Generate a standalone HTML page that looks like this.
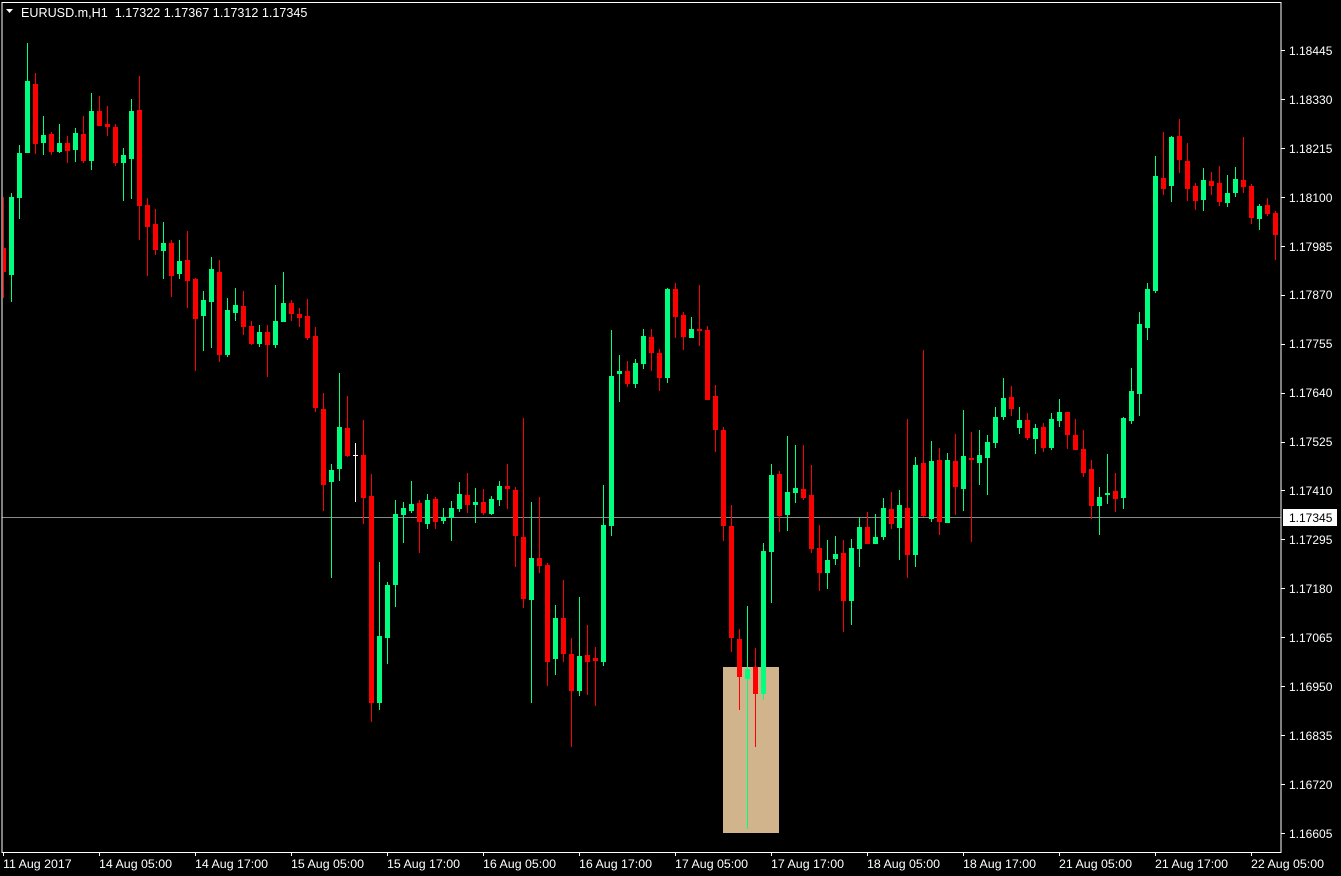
<!DOCTYPE html>
<html><head><meta charset="utf-8"><style>
html,body{margin:0;padding:0;background:#000;}
body{width:1341px;height:876px;overflow:hidden;position:relative;font-family:"Liberation Sans",sans-serif;}
svg{position:absolute;left:0;top:0;}
text{font-family:"Liberation Sans",sans-serif;font-size:12px;fill:#fff;}
.d{font-size:12.4px;}
</style></head><body>
<svg id="s" width="1341" height="876" viewBox="0 0 1341 876" xmlns="http://www.w3.org/2000/svg">
<rect x="0" y="0" width="1341" height="876" fill="#000"/>
<rect x="723" y="667" width="56" height="166" fill="#d2b48c"/>
<line x1="2" y1="517.5" x2="1281" y2="517.5" stroke="#8a8a8a" stroke-width="1"/>
<g id="c"></g>
<rect x="2" y="2.5" width="1279" height="850" fill="none" stroke="#fff" stroke-width="1"/>
<polygon points="6,9 13,9 9.5,13" fill="#fff"/>
<text x="21" y="17" style="font-size:12.6px">EURUSD.m,H1&#160;&#160;1.17322 1.17367 1.17312 1.17345</text>
<g id="ax"></g>
<rect x="1283" y="509" width="54" height="17" fill="#fff"/>
<text x="1289" y="522" style="fill:#000">1.17345</text>
<text class="d" x="3" y="868">11 Aug 2017</text>
<text class="d" x="99" y="868">14 Aug 05:00</text>
<text class="d" x="195" y="868">14 Aug 17:00</text>
<text class="d" x="291" y="868">15 Aug 05:00</text>
<text class="d" x="387" y="868">15 Aug 17:00</text>
<text class="d" x="483" y="868">16 Aug 05:00</text>
<text class="d" x="579" y="868">16 Aug 17:00</text>
<text class="d" x="675" y="868">17 Aug 05:00</text>
<text class="d" x="771" y="868">17 Aug 17:00</text>
<text class="d" x="867" y="868">18 Aug 05:00</text>
<text class="d" x="963" y="868">18 Aug 17:00</text>
<text class="d" x="1059" y="868">21 Aug 05:00</text>
<text class="d" x="1155" y="868">21 Aug 17:00</text>
<text class="d" x="1251" y="868">22 Aug 05:00</text>
<text x="1289" y="55">1.18445</text>
<text x="1289" y="104">1.18330</text>
<text x="1289" y="153">1.18215</text>
<text x="1289" y="202">1.18100</text>
<text x="1289" y="251">1.17985</text>
<text x="1289" y="299">1.17870</text>
<text x="1289" y="348">1.17755</text>
<text x="1289" y="397">1.17640</text>
<text x="1289" y="446">1.17525</text>
<text x="1289" y="495">1.17410</text>
<text x="1289" y="544">1.17295</text>
<text x="1289" y="593">1.17180</text>
<text x="1289" y="642">1.17065</text>
<text x="1289" y="691">1.16950</text>
<text x="1289" y="740">1.16835</text>
<text x="1289" y="789">1.16720</text>
<text x="1289" y="838">1.16605</text>
</svg>
<script>
var D=[
[197,248,272,298,'r'],[193,197,275,302,'g'],[145,153,198,219,'g'],[43,81,153,153,'g'],[73,84,144,154,'r'],
[116,135,143,155,'g'],[132,134,152,155,'r'],[124,143,152,153,'g'],[136,143,151,163,'r'],[128,133,150,162,'g'],
[116,134,161,163,'r'],[93,111,161,170,'g'],[96,111,126,126,'r'],[106,124,127,136,'r'],[124,127,163,166,'r'],
[148,155,163,201,'g'],[99,111,159,199,'g'],[76,110,206,240,'r'],[198,205,227,276,'r'],[209,224,250,255,'r'],
[222,243,251,279,'g'],[240,243,276,297,'r'],[240,261,274,279,'g'],[231,260,281,308,'r'],[278,279,319,371,'r'],
[291,300,316,351,'g'],[257,269,302,348,'g'],[260,272,355,362,'r'],[298,310,355,357,'g'],[288,305,313,321,'g'],
[291,306,327,335,'r'],[321,326,344,345,'r'],[325,332,344,347,'g'],[325,332,345,377,'r'],[285,321,345,348,'g'],
[272,303,322,322,'g'],[300,303,314,321,'r'],[308,314,318,327,'r'],[299,316,338,340,'r'],[327,336,408,412,'r'],
[393,409,485,511,'r'],[464,470,482,578,'g'],[373,427,469,481,'g'],[396,428,456,457,'r'],[443,455,456,502,'w'],
[420,455,498,524,'r'],[474,496,703,722,'r'],[562,636,703,710,'g'],[582,585,638,664,'g'],[500,514,585,607,'g'],
[502,508,515,543,'g'],[481,504,511,513,'g'],[500,503,522,553,'r'],[494,500,524,529,'g'],[497,499,522,529,'r'],
[508,517,521,524,'g'],[501,508,518,541,'g'],[482,494,509,512,'g'],[473,495,505,513,'r'],[488,502,505,523,'g'],
[489,502,513,515,'r'],[496,499,514,515,'g'],[481,486,500,506,'g'],[464,486,489,509,'r'],[487,490,536,567,'r'],
[418,537,599,608,'r'],[502,558,600,703,'g'],[497,558,566,573,'r'],[563,565,662,686,'r'],[605,618,659,675,'g'],
[580,618,654,662,'r'],[638,654,691,747,'r'],[597,656,691,696,'g'],[625,655,662,695,'r'],[647,658,661,706,'r'],
[485,525,662,666,'g'],[330,376,526,536,'g'],[355,371,374,402,'g'],[361,371,384,387,'r'],[359,363,384,388,'g'],
[329,336,364,369,'g'],[329,337,353,371,'r'],[349,353,378,391,'r'],[288,289,378,383,'g'],[283,289,317,338,'r'],
[312,315,337,350,'r'],[317,329,338,338,'g'],[285,329,331,346,'r'],[326,330,400,400,'r'],[385,396,430,452,'r'],
[427,430,526,541,'r'],[505,526,638,652,'r'],[629,639,677,710,'r'],[606,669,679,829,'g'],[648,667,694,747,'r'],
[543,551,694,700,'g'],[464,475,552,603,'g'],[471,474,516,532,'r'],[436,492,515,531,'g'],[445,488,493,503,'g'],
[445,489,498,500,'r'],[465,495,549,553,'r'],[525,548,573,591,'r'],[540,560,573,589,'g'],[536,554,559,565,'g'],
[540,553,601,632,'r'],[539,548,601,625,'g'],[517,527,549,567,'g'],[512,527,544,544,'r'],[514,537,544,544,'g'],
[498,508,537,540,'g'],[492,509,524,529,'r'],[490,505,528,560,'g'],[419,508,555,578,'r'],[457,465,555,567,'g'],
[350,463,516,517,'r'],[441,461,519,522,'g'],[448,460,522,535,'r'],[453,460,523,523,'g'],[434,461,487,515,'r'],
[410,456,489,511,'g'],[432,458,460,542,'r'],[430,455,463,485,'g'],[435,442,458,495,'g'],[407,417,443,448,'g'],
[378,398,417,420,'g'],[386,397,409,416,'r'],[407,420,428,434,'g'],[413,420,438,440,'r'],[424,428,439,454,'g'],
[423,427,448,452,'r'],[413,419,448,450,'g'],[399,412,421,427,'g'],[412,412,435,449,'r'],[419,435,450,450,'r'],
[430,449,473,477,'r'],[460,469,506,519,'r'],[487,497,506,535,'g'],[454,493,495,504,'g'],[473,491,499,512,'r'],
[417,418,498,509,'g'],[368,391,421,424,'g'],[312,324,394,416,'g'],[283,289,328,340,'g'],[156,176,291,293,'g'],
[132,178,189,195,'r'],[136,137,186,202,'g'],[119,136,160,173,'r'],[143,161,189,201,'r'],[183,186,201,210,'r'],
[168,180,200,211,'g'],[172,181,186,195,'r'],[166,183,202,206,'r'],[175,193,203,207,'g'],[167,179,193,197,'g'],
[137,180,187,193,'r'],[184,186,218,224,'r'],[204,206,219,230,'g'],[198,205,214,216,'r'],[211,213,235,260,'r']
];
var col={r:'#ff0000',g:'#00ff7f',w:'#ffffff'};
var h='';
for(var i=0;i<D.length;i++){var d=D[i],c=3+8*i,f=col[d[4]];
h+='<rect x="'+c+'" y="'+d[0]+'" width="1" height="'+Math.max(1,d[3]-d[0])+'" fill="'+f+'"/>';
var bx=c-2,bw=5;if(bx<3){bw-= (3-bx);bx=3;}
h+='<rect x="'+bx+'" y="'+d[1]+'" width="'+bw+'" height="'+Math.max(1,d[2]-d[1])+'" fill="'+f+'"/>';}
document.getElementById('c').innerHTML=h;
var a='';
for(var k=0;k<17;k++){var y=Math.round(50+k*48.94)+0.5;a+='<line x1="1281" y1="'+y+'" x2="1285" y2="'+y+'" stroke="#fff"/>';}
for(var t=0;t<14;t++){var x=3+96*t+0.5;a+='<line x1="'+x+'" y1="852" x2="'+x+'" y2="856" stroke="#fff"/>';}
document.getElementById('ax').innerHTML=a;
</script>
</body></html>
